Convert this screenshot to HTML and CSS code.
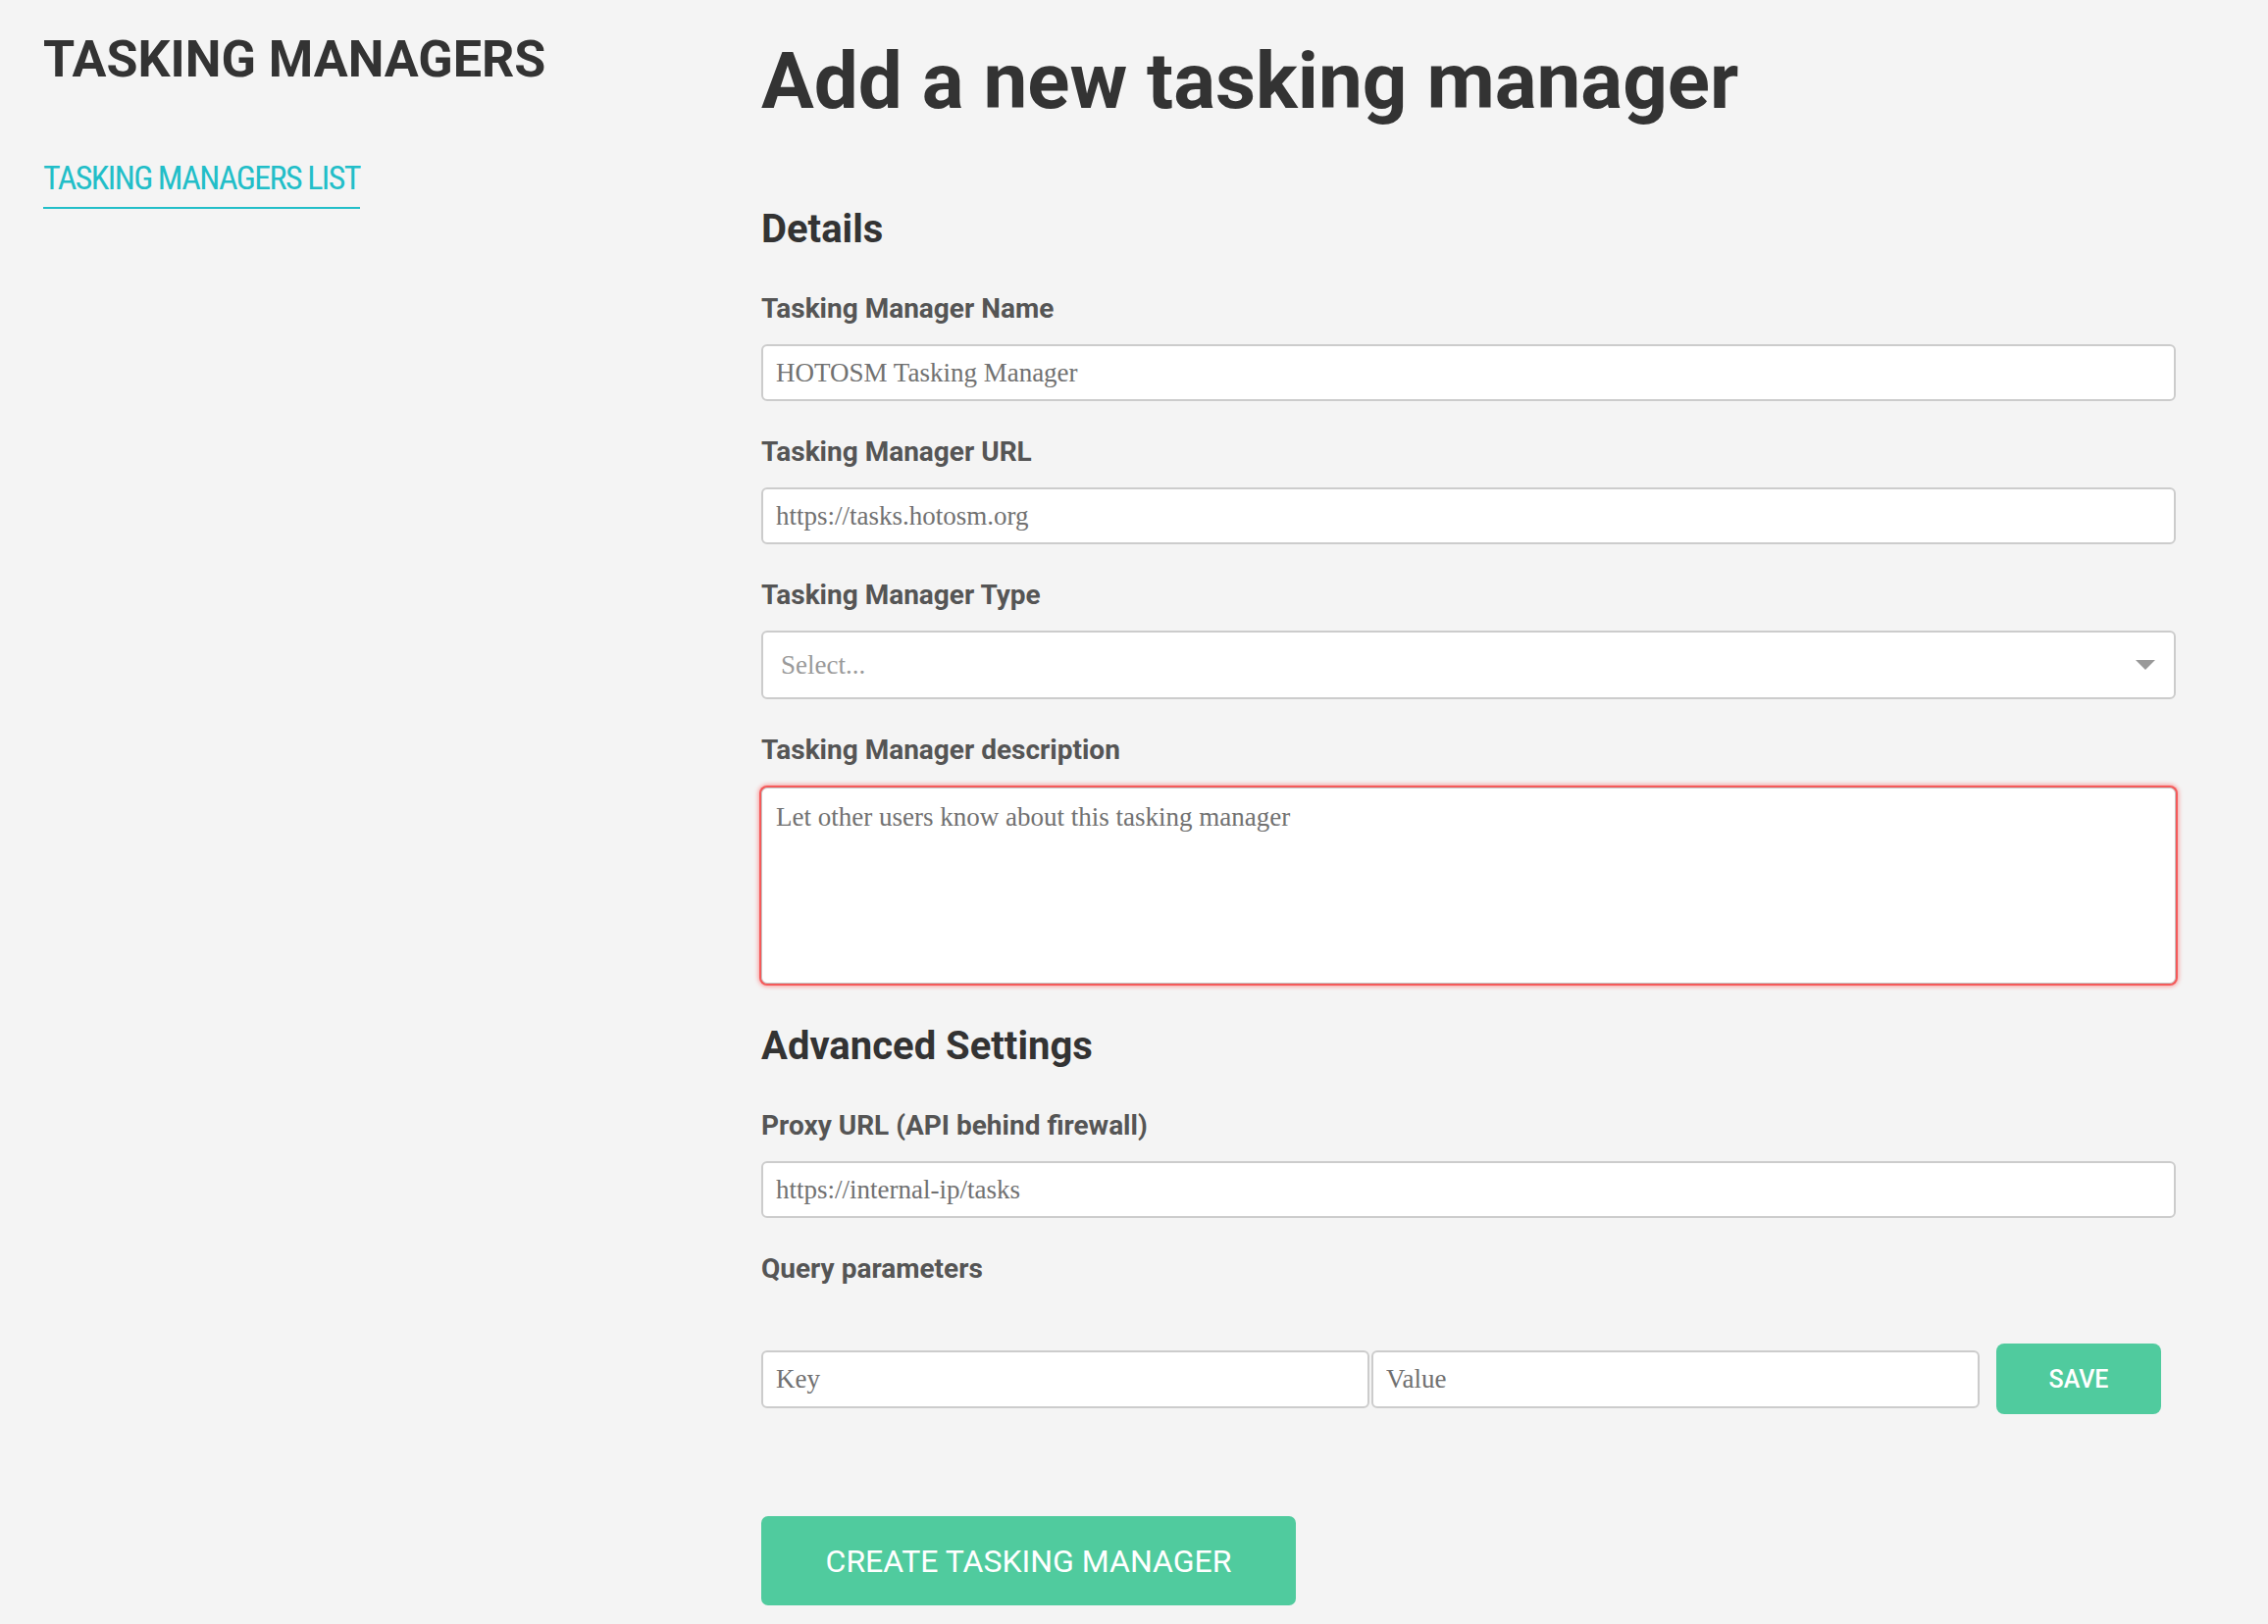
FILE: index.html
```html
<!DOCTYPE html>
<html lang="en">
<head>
<meta charset="utf-8">
<title>Add a new tasking manager</title>
<link rel="stylesheet" href="styles.css">
</head>
<body>
<div class="page">
  <aside class="sidebar">
    <h2 class="side-title">TASKING MANAGERS</h2>
    <a class="side-link" href="#">TASKING MANAGERS LIST</a>
  </aside>
  <main class="main">
    <h1 class="page-title">Add a new tasking manager</h1>

    <h3 class="section-title section-details">Details</h3>

    <div class="field">
      <label class="field-label">Tasking Manager Name</label>
      <input class="text-input" type="text" placeholder="HOTOSM Tasking Manager">
    </div>

    <div class="field">
      <label class="field-label">Tasking Manager URL</label>
      <input class="text-input" type="text" placeholder="https://tasks.hotosm.org">
    </div>

    <div class="field field-select">
      <label class="field-label">Tasking Manager Type</label>
      <div class="select-box">
        <span class="select-placeholder">Select...</span>
        <svg class="select-arrow" width="20" height="10" viewBox="0 0 20 10"><path d="M0 0 H20 L10 10 Z" fill="#999"/></svg>
      </div>
    </div>

    <div class="field field-desc">
      <label class="field-label label-desc">Tasking Manager description</label>
      <textarea class="text-area" placeholder="Let other users know about this tasking manager"></textarea>
    </div>

    <h3 class="section-title section-advanced">Advanced Settings</h3>

    <div class="field">
      <label class="field-label">Proxy URL (API behind firewall)</label>
      <input class="text-input" type="text" placeholder="https://internal-ip/tasks">
    </div>

    <div class="field field-query">
      <label class="field-label">Query parameters</label>
    </div>

    <div class="param-row">
      <input class="text-input param-input" type="text" placeholder="Key">
      <input class="text-input param-input" type="text" placeholder="Value">
      <button class="btn btn-save" type="button">SAVE</button>
    </div>

    <button class="btn btn-create" type="button">CREATE TASKING MANAGER</button>
  </main>
</div>
</body>
</html>
```

FILE: styles.css
```css
html, body {
  margin: 0;
  padding: 0;
}

body {
  background: #f4f4f4;
  font-family: Roboto, "Liberation Sans", sans-serif;
  color: #333333;
}

.page {
  display: grid;
  grid-template-columns: 732px 1442px;
  padding-left: 44px;
  min-height: 1656px;
  box-sizing: border-box;
}

/* Sidebar */
.sidebar {
  padding-top: 35px;
  display: flex;
  flex-direction: column;
  align-items: flex-start;
}

.side-title {
  margin: 0;
  font-size: 52px;
  line-height: 52px;
  font-weight: 700;
  color: #333333;
}

.side-link {
  margin-top: 77px;
  display: inline-block;
  font-family: "Roboto Condensed", Roboto, sans-serif;
  font-stretch: 75%;
  font-size: 34px;
  line-height: 34px;
  font-weight: 400;
  letter-spacing: -1.6px;
  color: #22bec8;
  text-decoration: none;
  padding-bottom: 13px;
  border-bottom: 2px solid #22bec8;
}

/* Main */
.main {
  padding-top: 43px;
  display: flex;
  flex-direction: column;
  align-items: stretch;
}

.page-title {
  margin: 0;
  font-size: 80px;
  line-height: 80px;
  font-weight: 700;
  color: #333333;
}

.section-title {
  margin: 0;
  font-size: 40px;
  line-height: 40px;
  font-weight: 700;
  color: #333333;
}

.section-details {
  margin-top: 91px;
  margin-bottom: 47px;
}

.section-advanced {
  margin-top: 44px;
  margin-bottom: 47px;
}

.field {
  display: flex;
  flex-direction: column;
  margin-bottom: 38px;
}

.field-label {
  font-size: 28px;
  line-height: 28px;
  font-weight: 700;
  color: #555555;
  margin-bottom: 22px;
}

.field-select {
  margin-bottom: 38px;
}

.label-desc {
  margin-bottom: 24px;
}

.field-desc {
  margin-bottom: 0;
}

.field-query {
  margin-bottom: 0;
}

.field-query .field-label {
  margin-bottom: 0;
}

.text-input {
  box-sizing: border-box;
  height: 58px;
  width: 100%;
  margin: 0;
  border: 2px solid #cccccc;
  border-radius: 6px;
  background: #ffffff;
  padding: 0 13px;
  font-family: "Liberation Serif", "Times New Roman", serif;
  font-size: 27px;
  color: #666666;
  outline: none;
}

.text-input::placeholder,
.text-area::placeholder {
  color: #717171;
  opacity: 1;
}

.select-box {
  box-sizing: border-box;
  height: 70px;
  border: 2px solid #cccccc;
  border-radius: 6px;
  background: #ffffff;
  display: flex;
  align-items: center;
  justify-content: space-between;
  padding: 0 19px 0 18px;
}

.select-placeholder {
  font-family: "Liberation Serif", "Times New Roman", serif;
  font-size: 27px;
  color: #9a9a9a;
}

.select-arrow {
  display: block;
}

.text-area {
  box-sizing: border-box;
  display: block;
  width: 100%;
  height: 200px;
  margin: 0;
  border: 1px solid #c4c4c4;
  border-radius: 6px;
  background: #ffffff;
  padding: 9px 14px;
  font-family: "Liberation Serif", "Times New Roman", serif;
  font-size: 27px;
  line-height: 40px;
  color: #666666;
  resize: none;
  outline: none;
  box-shadow: 0 0 0 2px #f55a5a, 0 0 4px 3px rgba(255, 50, 50, 0.45);
}

/* Query parameter row */
.param-row {
  margin-top: 62px;
  display: flex;
  align-items: center;
  gap: 2px;
}

.param-input {
  width: 620px;
  height: 59px;
  flex: none;
}

.btn {
  border: none;
  background: #50cb9e;
  color: #ffffff;
  font-family: Roboto, "Liberation Sans", sans-serif;
  font-weight: 500;
  cursor: pointer;
  display: inline-flex;
  align-items: center;
  justify-content: center;
  padding: 0;
}

.btn-save {
  margin-left: 15px;
  width: 168px;
  height: 72px;
  border-radius: 8px;
  font-size: 25px;
}

.btn-create {
  margin-top: 104px;
  align-self: flex-start;
  width: 545px;
  height: 91px;
  border-radius: 7px;
  font-size: 32px;
  font-weight: 400;
}
```
